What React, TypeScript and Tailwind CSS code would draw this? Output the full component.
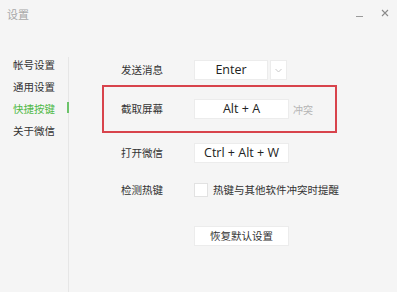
const font = { fontFamily: '"Noto Sans CJK SC", "Noto Sans", sans-serif' };
const latin = { fontFamily: '"Open Sans", "Noto Sans", sans-serif' };

const menu = ["帐号设置", "通用设置", "快捷按键", "关于微信"];

function KeyBox({ text, w = "w-[95px]" }: { text: string; w?: string }) {
  return (
    <div
      className={`${w} h-[20px] bg-white border border-[#ececec] flex items-center justify-center text-[12.5px] text-[#222]`}
      style={latin}
    >
      {text}
    </div>
  );
}

function Row({ label, children }: { label: string; children: React.ReactNode }) {
  return (
    <div className="flex items-center h-[20px] pl-[17px]">
      <div className="w-[73px] text-[10.5px] text-[#333]">{label}</div>
      {children}
    </div>
  );
}

export default function App() {
  return (
    <div className="w-[397px] h-[292px] bg-[#f5f5f5] flex flex-col select-none" style={font}>
      <div className="h-[28px] flex items-center justify-between pl-[7px] pr-[6px]">
        <span className="text-[11px] text-[#a8a8a8]">设置</span>
        <div className="flex items-center gap-[18px]">
          <span className="w-[7px] h-px bg-[#9a9a9a] mt-[4px]" />
          <svg width="8" height="8" viewBox="0 0 8 8" className="mb-[2px] mr-[2px]">
            <path d="M1 1 L7 7 M7 1 L1 7" stroke="#8a8a8a" strokeWidth="1.1" />
          </svg>
        </div>
      </div>
      <div className="flex flex-1">
        <div className="w-[69px] mt-[29px] border-r border-[#e6e6e6]">
          <div className="-mt-[3px] flex flex-col">
            {menu.map((m, i) => (
              <div key={m} className="relative h-[22px] flex items-center pl-[13px] text-[10.5px]">
                <span className={i === 2 ? "text-[#4fb946]" : "text-[#333]"}>{m}</span>
                {i === 2 && <span className="absolute right-[-1px] top-[4px] w-[2px] h-[11px] bg-[#6cc36a]" />}
              </div>
            ))}
          </div>
        </div>
        <div className="flex-1 pl-[33px] flex flex-col">
          <div className="mt-[32px] border-x-2 border-transparent w-[235px]">
            <Row label="发送消息">
              <KeyBox text="Enter" w="w-[74px]" />
              <div className="ml-[2px] w-[17px] h-[20px] bg-white border border-[#ececec] flex items-center justify-center">
                <svg width="7" height="5" viewBox="0 0 7 5">
                  <path d="M0.5 1 L3.5 4 L6.5 1" stroke="#c8c8c8" fill="none" strokeWidth="1" />
                </svg>
              </div>
            </Row>
          </div>
          <div className="mt-[5px] w-[235px] h-[48px] border-2 border-[#d8434c] flex items-center">
            <div className="w-full">
              <Row label="截取屏幕">
                <KeyBox text="Alt + A" />
                <span className="ml-[4px] text-[10px] text-[#b4b4b4]">冲突</span>
              </Row>
            </div>
          </div>
          <div className="mt-[10px] border-x-2 border-transparent">
            <Row label="打开微信">
              <KeyBox text="Ctrl + Alt + W" />
            </Row>
          </div>
          <div className="mt-[17px] border-x-2 border-transparent">
            <Row label="检测热键">
              <div className="w-[14px] h-[14px] bg-white border border-[#e2e2e2] -mt-[1px]" />
              <span className="ml-[5px] text-[10.5px] text-[#333]">热键与其他软件冲突时提醒</span>
            </Row>
          </div>
          <div className="mt-[26px] border-x-2 border-transparent pl-[90px]">
            <div className="w-[95px] h-[20px] bg-white border border-[#ececec] flex items-center justify-center text-[10.5px] text-[#333]">
              恢复默认设置
            </div>
          </div>
        </div>
      </div>
    </div>
  );
}
